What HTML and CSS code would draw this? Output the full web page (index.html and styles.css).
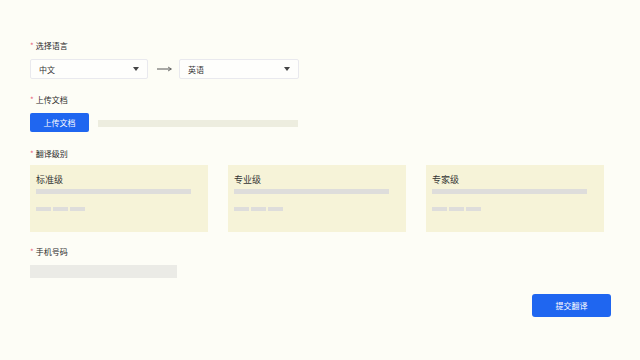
FILE: index.html
```html
<!DOCTYPE html>
<html lang="zh-CN">
<head>
  <meta charset="UTF-8">
  <meta name="viewport" content="width=device-width, initial-scale=1.0">
  <title>文档翻译</title>
  <link rel="stylesheet" href="styles.css">
</head>
<body>
  <div id="form">
    <div class="label"><span class="req">*</span>选择语言</div>
    <div class="lang-row">
      <div class="select">
        <span>中文</span>
        <svg class="caret" width="6" height="4" viewBox="0 0 6 4"><polygon points="0,0 6,0 3,4" fill="#444"/></svg>
      </div>
      <svg class="swap" width="16" height="6" viewBox="0 0 16 6"><path d="M0 3 H14" stroke="#555" stroke-width="1"/><path d="M11 1 L14.5 3 L11 5" stroke="#555" stroke-width="0.8" fill="none"/></svg>
      <div class="select">
        <span>英语</span>
        <svg class="caret" width="6" height="4" viewBox="0 0 6 4"><polygon points="0,0 6,0 3,4" fill="#444"/></svg>
      </div>
    </div>

    <div class="label"><span class="req">*</span>上传文档</div>
    <div class="upload-row">
      <button id="uploadButton" class="btn">上传文档</button>
      <div class="skeleton file-bar"></div>
    </div>

    <div class="label"><span class="req">*</span>翻译级别</div>
    <div class="levels">
      <div class="card">
        <div class="card-title">标准级</div>
        <div class="line"></div>
        <div class="chips"><i></i><i></i><i></i></div>
      </div>
      <div class="card">
        <div class="card-title">专业级</div>
        <div class="line"></div>
        <div class="chips"><i></i><i></i><i></i></div>
      </div>
      <div class="card">
        <div class="card-title">专家级</div>
        <div class="line"></div>
        <div class="chips"><i></i><i></i><i></i></div>
      </div>
    </div>

    <div class="label"><span class="req">*</span>手机号码</div>
    <div class="skeleton phone"></div>

    <div class="actions">
      <button id="submitButton" class="btn">提交翻译</button>
    </div>
  </div>
</body>
</html>
```

FILE: styles.css
```css
body {
  margin: 0;
  background-color: #fdfdf6;
  font-family: "Noto Sans CJK SC", "Noto Sans", sans-serif;
  color: #333;
}

#form {
  width: 581px;
  padding: 41px 0 0 30px;
}

.label {
  height: 10px;
  line-height: 10px;
  font-size: 8px;
  color: #2a2a2a;
  margin-bottom: 8px;
}

.req {
  color: #e8637a;
  margin-right: 2px;
}

.lang-row {
  display: flex;
  align-items: center;
  margin-bottom: 16px;
}

.select {
  width: 118px;
  height: 20px;
  box-sizing: border-box;
  border: 1px solid #e9e9ee;
  border-radius: 2px;
  display: flex;
  align-items: center;
  justify-content: space-between;
  padding: 0 8px 0 8px;
  font-size: 8px;
  background-color: #fefefc;
}

.lang-row .select:last-child {
  width: 120px;
}

.swap {
  margin: 0 6px 0 9px;
}

.upload-row {
  display: flex;
  align-items: center;
  margin-bottom: 17px;
}

.btn {
  border: none;
  border-radius: 2px;
  background-color: #1f66f0;
  color: white;
  font-family: inherit;
  font-size: 8px;
  cursor: pointer;
  padding: 0;
}

#uploadButton {
  width: 59px;
  height: 19px;
}

.skeleton {
  background-color: #ededdf;
}

.file-bar {
  width: 200px;
  height: 7px;
  margin-left: 9px;
  margin-top: 2px;
}

.levels {
  display: grid;
  grid-template-columns: repeat(3, 178px);
  gap: 20px;
  margin-top: -2px;
  margin-bottom: 15px;
}

.card {
  height: 67px;
  box-sizing: border-box;
  background-color: #f6f3d8;
  padding: 9px 17px 0 6px;
}

.card-title {
  font-size: 9px;
  line-height: 12px;
  color: #333;
}

.line {
  height: 5px;
  background-color: #dedddb;
  margin-top: 3px;
}

.chips {
  display: flex;
  gap: 2px;
  margin-top: 13px;
}

.chips i {
  width: 15px;
  height: 4px;
  background-color: #dedddb;
}

.phone {
  width: 147px;
  height: 13px;
  margin-bottom: 16px;
  background-color: #ebebe6;
}

.actions {
  display: flex;
  justify-content: flex-end;
}

#submitButton {
  width: 79px;
  height: 23px;
  font-size: 8px;
  border-radius: 3px;
}
```
